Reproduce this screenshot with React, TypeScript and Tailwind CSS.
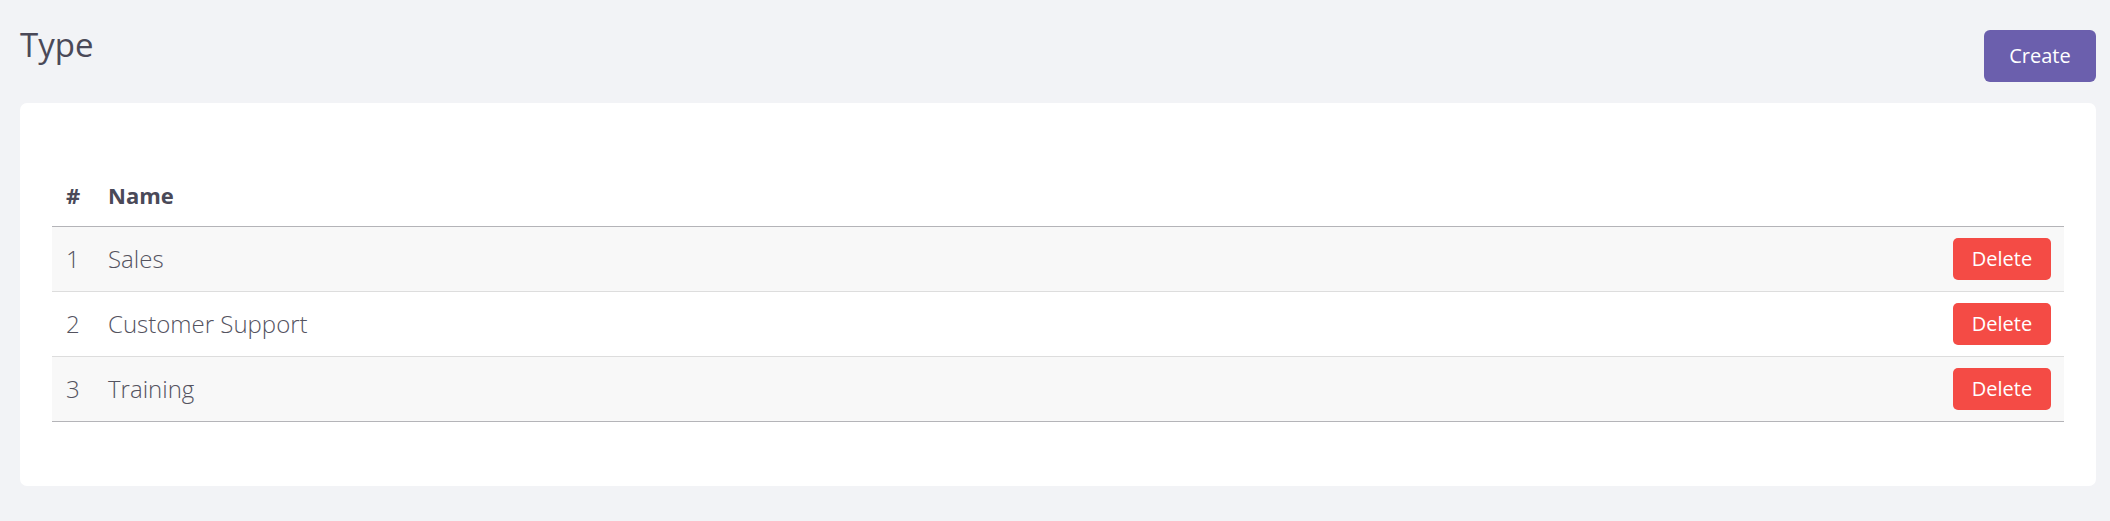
import React from 'react';

interface TypeRow {
  id: number;
  name: string;
}

const TYPES: TypeRow[] = [
  { id: 1, name: 'Sales' },
  { id: 2, name: 'Customer Support' },
  { id: 3, name: 'Training' },
];

const App: React.FC = () => {
  return (
    <div className="min-h-screen bg-[#f2f3f6] pl-[20px] pr-[14px] pt-[25px] pb-[35px] font-['Open_Sans',sans-serif] text-[#54535f]">
      {/* page header */}
      <div className="flex items-start justify-between">
        <h1 className="text-[33px] leading-[40px] font-normal text-[#4a4958]">Type</h1>
        <button className="mt-[5px] h-[52px] w-[112px] rounded-[6px] border-0 bg-[#6b5fad] text-[20px] text-white">
          Create
        </button>
      </div>

      {/* table card */}
      <div className="mt-[21px] rounded-[7px] bg-white px-[32px] pt-[63px] pb-[64px]">
        <table className="w-full border-collapse">
          <thead>
            <tr className="border-b border-[#b4b4b8]">
              <th className="h-[60px] w-[56px] pl-[14px] text-left text-[22px] font-bold text-[#4a4958]">#</th>
              <th className="h-[60px] text-left text-[22px] font-bold text-[#4a4958]">Name</th>
              <th className="h-[60px]"></th>
            </tr>
          </thead>
          <tbody>
            {TYPES.map((t, i) => (
              <tr
                key={t.id}
                className={`${i % 2 === 0 ? 'bg-[#f8f8f8]' : 'bg-white'} ${
                  i === TYPES.length - 1 ? 'border-b border-[#b4b4b8]' : 'border-b border-[#dddddd]'
                }`}
              >
                <td className="h-[65px] pl-[14px] text-[24px] font-light">{t.id}</td>
                <td className="h-[65px] text-[24px] font-light">{t.name}</td>
                <td className="h-[65px] pr-[13px] text-right">
                  <button className="h-[42px] w-[98px] rounded-[5px] border-0 bg-[#f44b45] text-[20px] text-white">
                    Delete
                  </button>
                </td>
              </tr>
            ))}
          </tbody>
        </table>
      </div>
    </div>
  );
};

export default App;
